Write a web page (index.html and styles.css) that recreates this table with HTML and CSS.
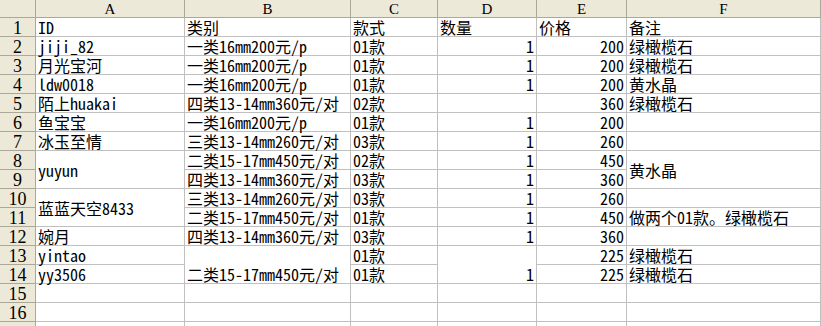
FILE: index.html
```html
<!DOCTYPE html>
<html lang="zh">
<head>
<meta charset="utf-8">
<title>Sheet</title>
<link rel="stylesheet" href="styles.css">
</head>
<body>
<div class="sheet">
  <div class="hd corner"></div>
  <div class="hd col">A</div>
  <div class="hd col">B</div>
  <div class="hd col">C</div>
  <div class="hd col">D</div>
  <div class="hd col">E</div>
  <div class="hd col">F</div>
  <div class="hd col tail"></div>

  <div class="hd rn">1</div>
  <div class="c">ID</div><div class="c">类别</div><div class="c">款式</div><div class="c">数量</div><div class="c">价格</div><div class="c">备注</div><div class="c tail"></div>

  <div class="hd rn">2</div>
  <div class="c">jiji_82</div><div class="c">一类16mm200元/p</div><div class="c">01款</div><div class="c r">1</div><div class="c r">200</div><div class="c">绿橄榄石</div><div class="c tail"></div>

  <div class="hd rn">3</div>
  <div class="c">月光宝河</div><div class="c">一类16mm200元/p</div><div class="c">01款</div><div class="c r">1</div><div class="c r">200</div><div class="c">绿橄榄石</div><div class="c tail"></div>

  <div class="hd rn">4</div>
  <div class="c">ldw0018</div><div class="c">一类16mm200元/p</div><div class="c">01款</div><div class="c r">1</div><div class="c r">200</div><div class="c">黄水晶</div><div class="c tail"></div>

  <div class="hd rn">5</div>
  <div class="c">陌上huakai</div><div class="c">四类13-14mm360元/对</div><div class="c">02款</div><div class="c r"></div><div class="c r">360</div><div class="c">绿橄榄石</div><div class="c tail"></div>

  <div class="hd rn">6</div>
  <div class="c">鱼宝宝</div><div class="c">一类16mm200元/p</div><div class="c">01款</div><div class="c r">1</div><div class="c r">200</div><div class="c"></div><div class="c tail"></div>

  <div class="hd rn">7</div>
  <div class="c">冰玉至情</div><div class="c">三类13-14mm260元/对</div><div class="c">03款</div><div class="c r">1</div><div class="c r">260</div><div class="c"></div><div class="c tail"></div>

  <div class="hd rn">8</div>
  <div class="c span2 mid">yuyun</div><div class="c">二类15-17mm450元/对</div><div class="c">02款</div><div class="c r">1</div><div class="c r">450</div><div class="c span2 mid">黄水晶</div><div class="c tail"></div>

  <div class="hd rn">9</div>
  <div class="c">四类13-14mm360元/对</div><div class="c">03款</div><div class="c r">1</div><div class="c r">360</div><div class="c tail"></div>

  <div class="hd rn">10</div>
  <div class="c span2 mid">蓝蓝天空8433</div><div class="c">三类13-14mm260元/对</div><div class="c">03款</div><div class="c r">1</div><div class="c r">260</div><div class="c"></div><div class="c tail"></div>

  <div class="hd rn">11</div>
  <div class="c">二类15-17mm450元/对</div><div class="c">01款</div><div class="c r">1</div><div class="c r">450</div><div class="c">做两个01款。绿橄榄石</div><div class="c tail"></div>

  <div class="hd rn">12</div>
  <div class="c">婉月</div><div class="c">四类13-14mm360元/对</div><div class="c">03款</div><div class="c r">1</div><div class="c r">360</div><div class="c"></div><div class="c tail"></div>

  <div class="hd rn">13</div>
  <div class="c">yintao</div><div class="c span2">二类15-17mm450元/对</div><div class="c">01款</div><div class="c r span2">1</div><div class="c r">225</div><div class="c">绿橄榄石</div><div class="c tail"></div>

  <div class="hd rn">14</div>
  <div class="c">yy3506</div><div class="c">01款</div><div class="c r">225</div><div class="c">绿橄榄石</div><div class="c tail"></div>

  <div class="hd rn">15</div>
  <div class="c"></div><div class="c"></div><div class="c"></div><div class="c"></div><div class="c"></div><div class="c"></div><div class="c tail"></div>

  <div class="hd rn">16</div>
  <div class="c"></div><div class="c"></div><div class="c"></div><div class="c"></div><div class="c"></div><div class="c"></div><div class="c tail"></div>

  <div class="hd rn"></div>
  <div class="c"></div><div class="c"></div><div class="c"></div><div class="c"></div><div class="c"></div><div class="c"></div><div class="c tail"></div>
</div>
</body>
</html>
```

FILE: styles.css
```css
html, body {
  margin: 0;
  padding: 0;
  background: #ffffff;
  overflow: hidden;
}

.sheet {
  display: grid;
  grid-template-columns: 36px 149px 166px 87px 99px 90px 194px 20px;
  grid-template-rows: 18px repeat(17, 19px);
  font-family: "Noto Sans Mono CJK SC", "Noto Sans CJK SC", "Liberation Mono", monospace;
  font-size: 16px;
  color: #000000;
  width: 841px;
}

.hd {
  background: #ece9d8;
  border-right: 1px solid #aca899;
  border-bottom: 1px solid #aca899;
  box-sizing: border-box;
  display: flex;
  align-items: center;
  justify-content: center;
  font-family: "Liberation Serif", "Noto Sans CJK SC", serif;
  line-height: 1;
  overflow: hidden;
}

.col {
  font-size: 15px;
  padding-top: 1px;
}

.rn {
  font-size: 18px;
  padding-top: 1px;
}

.corner {
  border-right-color: #aca899;
}

.c {
  border-right: 1px solid #c0c0c0;
  border-bottom: 1px solid #c0c0c0;
  box-sizing: border-box;
  display: flex;
  align-items: flex-end;
  justify-content: flex-start;
  padding: 0 2px 0 2px;
  line-height: 18px;
  white-space: nowrap;
  overflow: visible;
}

.r {
  justify-content: flex-end;
}

.span2 {
  grid-row: span 2;
}

.mid {
  align-items: center;
}

.tail {
  border-right: none;
}
```
